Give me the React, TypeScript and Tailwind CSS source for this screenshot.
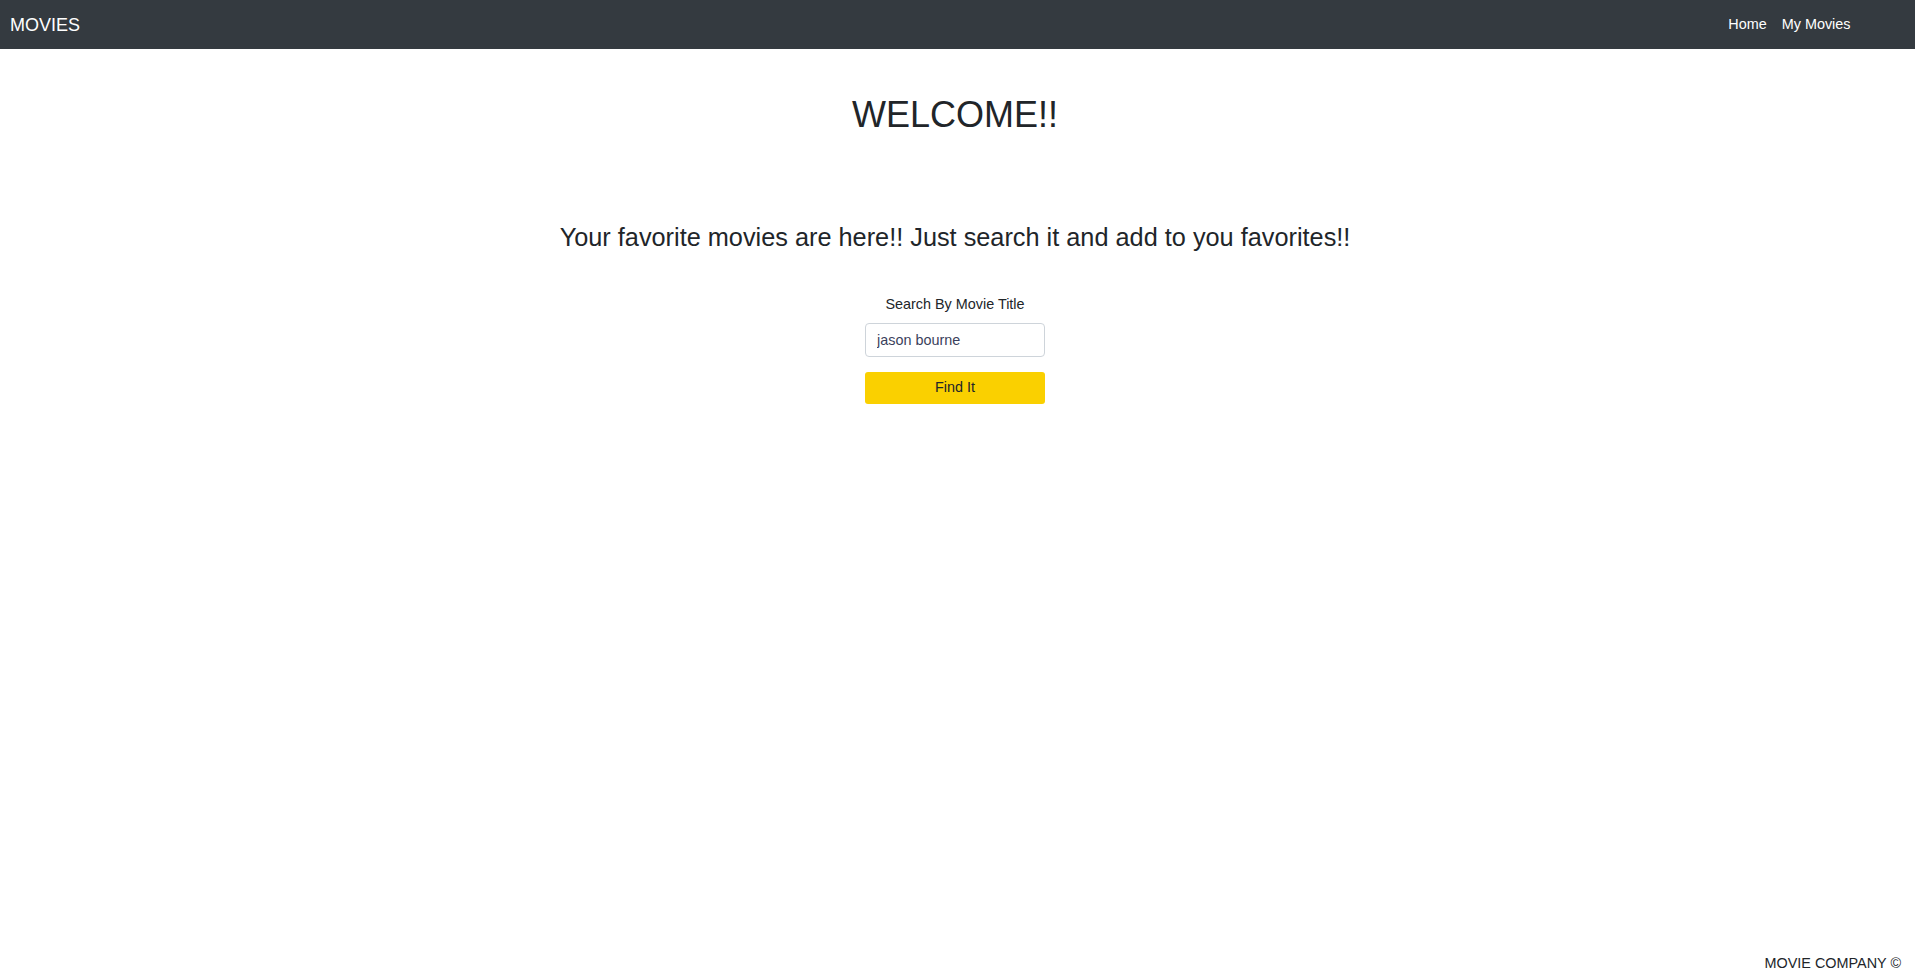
import { useState } from "react";

const links = [
  { href: "#", label: "Home" },
  { href: "#", label: "My Movies" },
];

export default function App() {
  const [title, setTitle] = useState("jason bourne");

  return (
    <div className="flex min-h-screen flex-col bg-white font-['Liberation_Sans',Arial,sans-serif] text-[#212529]">
      <header className="flex h-[49px] items-center justify-between bg-[#343a40] pl-[10px] pr-[57px]">
        <a href="#" className="text-[18px] leading-none text-white no-underline">
          MOVIES
        </a>
        <nav className="flex items-center">
          {links.map((l) => (
            <a
              key={l.label}
              href={l.href}
              className="px-[7.5px] text-[14.4px] leading-none text-white no-underline"
            >
              {l.label}
            </a>
          ))}
        </nav>
      </header>

      <main className="flex flex-1 flex-col items-center pr-[5px]">
        <h1 className="mt-[45px] text-[36px] leading-[41px] font-normal">WELCOME!!</h1>

        <p className="mt-[88px] text-[25.3px] leading-[29px]">
          Your favorite movies are here!! Just search it and add to you favorites!!
        </p>

        <form
          className="mt-[44px] flex w-[180px] flex-col items-center"
          onSubmit={(e) => e.preventDefault()}
        >
          <label htmlFor="title" className="text-[14.4px] leading-[17px]">
            Search By Movie Title
          </label>
          <input
            id="title"
            value={title}
            onChange={(e) => setTitle(e.target.value)}
            className="mt-[10px] h-[34px] w-full rounded-[4px] border border-[#ced4da] bg-white px-[11px] text-[14.4px] text-[#3b3f5c] outline-none"
          />
          <button
            type="submit"
            className="mt-[15px] h-[32px] w-full rounded-[3px] bg-[#fad000] text-[14.4px] text-[#212529]"
          >
            Find It
          </button>
        </form>
      </main>

      <footer className="flex justify-end px-[14px] pb-[4px] pt-[2px]">
        <span className="text-[14.4px] leading-[16px] text-[#212529]">MOVIE COMPANY ©</span>
      </footer>
    </div>
  );
}
